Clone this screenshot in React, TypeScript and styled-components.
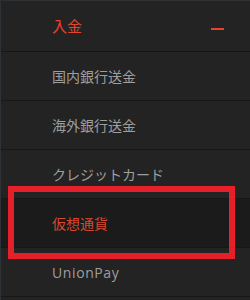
import React from "react";
import styled, { createGlobalStyle } from "styled-components";

const GlobalStyle = createGlobalStyle`
  html, body {
    margin: 0;
    padding: 0;
    background: #232323;
  }
`;

const Menu = styled.nav`
  position: relative;
  width: 249px;
  height: 300px;
  overflow: hidden;
  background: #232323;
  border-left: 1px solid #2c3235;
  border-top: 1px solid #2e3133;
  font-family: "Noto Sans CJK JP", "Noto Sans", sans-serif;
`;

const Header = styled.div`
  display: flex;
  align-items: center;
  justify-content: space-between;
  height: 51px;
  padding: 0 26px 2px 51px;
  box-sizing: border-box;
  border-bottom: 1px solid #161616;
  color: #e8432c;
  font-size: 15px;
`;

const Minus = styled.span`
  display: block;
  width: 13px;
  height: 2px;
  margin-top: 8px;
  background: #e8432c;
`;

const Item = styled.div<{ $active?: boolean; $latin?: boolean }>`
  display: flex;
  align-items: center;
  height: 48px;
  padding-left: 51px;
  border-bottom: 1px solid #171717;
  background: ${({ $active }) => ($active ? "#1b1b1b" : "transparent")};
  color: ${({ $active }) => ($active ? "#d9482e" : "#9e9e9e")};
  font-size: 14px;
  font-family: ${({ $latin }) =>
    $latin ? '"Open Sans", sans-serif' : '"Noto Sans CJK JP", sans-serif'};
  letter-spacing: ${({ $latin }) => ($latin ? "0.6px" : "0")};
`;

const Highlight = styled.div`
  position: absolute;
  left: 7px;
  top: 185px;
  width: 215px;
  height: 61px;
  border: 6px solid #e5202a;
  pointer-events: none;
`;

const items = [
  { label: "国内銀行送金" },
  { label: "海外銀行送金" },
  { label: "クレジットカード" },
  { label: "仮想通貨", active: true },
  { label: "UnionPay", latin: true },
];

export default function App() {
  return (
    <>
      <GlobalStyle />
      <Menu>
        <Header>
          <span>入金</span>
          <Minus />
        </Header>
        {items.map((it) => (
          <Item key={it.label} $active={it.active} $latin={it.latin}>
            {it.label}
          </Item>
        ))}
        <Highlight />
      </Menu>
    </>
  );
}
